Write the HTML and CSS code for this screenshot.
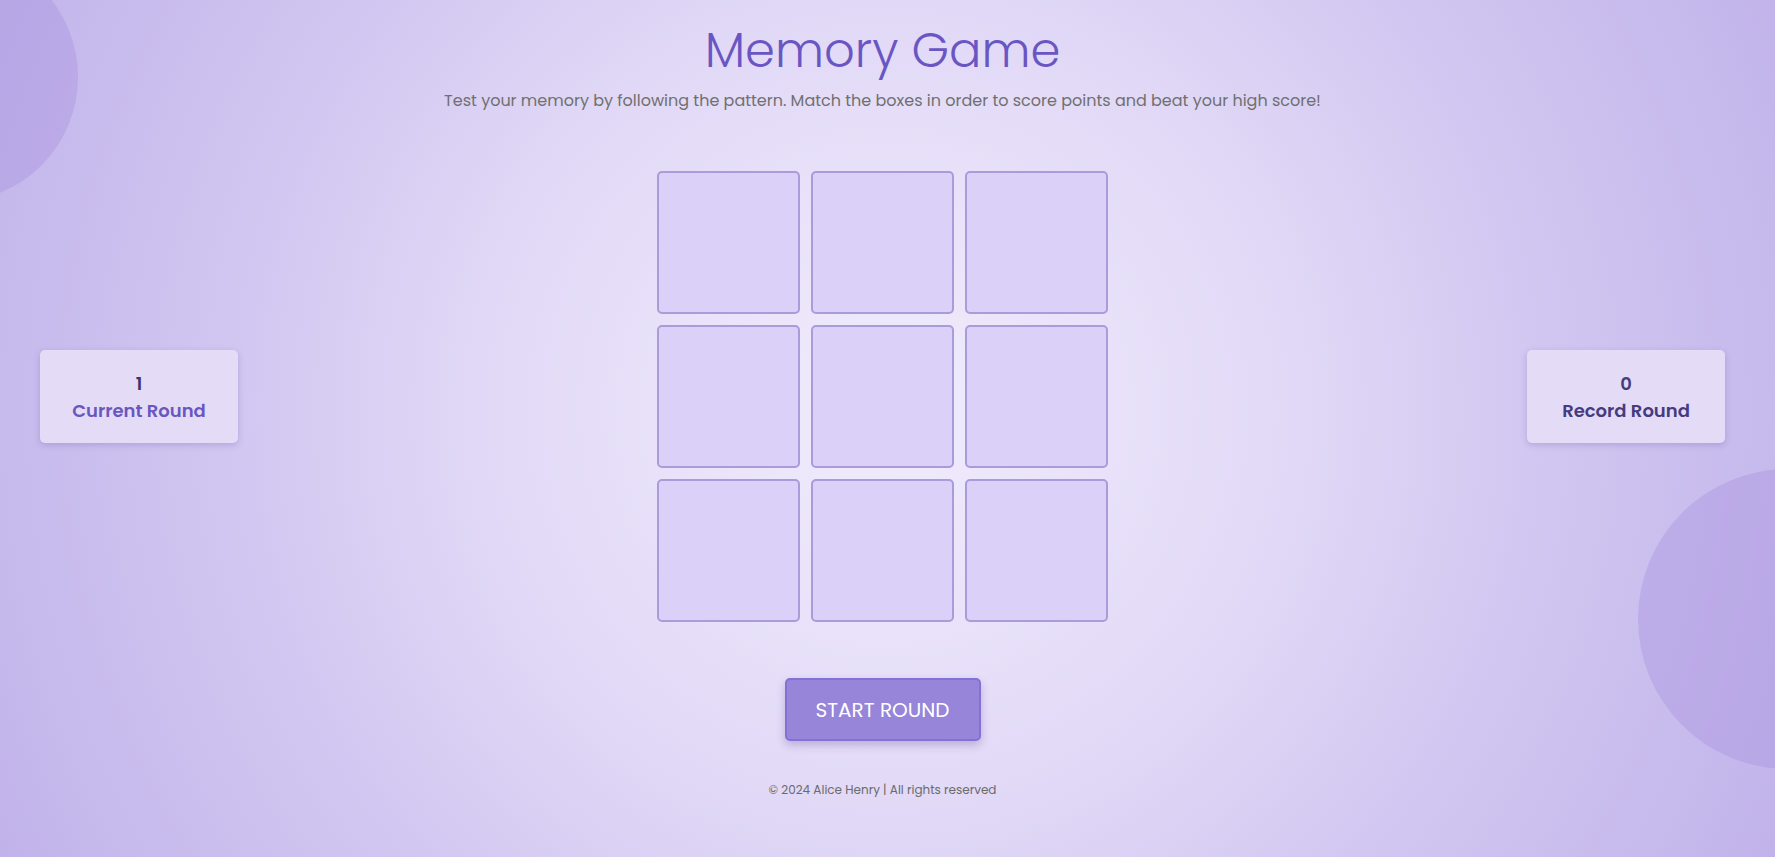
FILE: index.html
```html
<!DOCTYPE html>
<html lang="en">
<head>
<meta charset="utf-8">
<title>Memory Game</title>
<link rel="stylesheet" href="styles.css">
</head>
<body>
<div class="bubble bubble-tl"></div>
<div class="bubble bubble-br"></div>
<main class="page">
  <header class="header">
    <h1 class="title">Memory Game</h1>
    <p class="subtitle">Test your memory by following the pattern. Match the boxes in order to score points and beat your high score!</p>
  </header>
  <section class="game">
    <div class="panel panel-current">
      <div class="panel-value">1</div>
      <div class="panel-label">Current Round</div>
    </div>
    <div class="board">
      <div class="tile"></div><div class="tile"></div><div class="tile"></div>
      <div class="tile"></div><div class="tile"></div><div class="tile"></div>
      <div class="tile"></div><div class="tile"></div><div class="tile"></div>
    </div>
    <div class="panel panel-record">
      <div class="panel-value">0</div>
      <div class="panel-label">Record Round</div>
    </div>
  </section>
  <div class="actions">
    <button class="start-btn" type="button">START ROUND</button>
  </div>
  <footer class="footer">© 2024 Alice Henry | All rights reserved</footer>
</main>
</body>
</html>
```
FILE: styles.css
```css
* { box-sizing: border-box; }
html { height: 100%; overflow: hidden; }
body {
  margin: 0;
  height: 100%;
  overflow: hidden;
  font-family: "Poppins", "Inter", "DejaVu Sans", sans-serif;
  background: radial-gradient(circle farthest-corner at 50% 48%, #f1ecfc 0%, #e9e2fa 22%, #e0d8f6 42%, #d2c7f1 65%, #c1b3ea 100%);
  position: relative;
}
.bubble {
  position: absolute;
  border-radius: 50%;
  background: rgba(170, 150, 224, 0.45);
  z-index: 0;
}
.bubble-tl { width: 250px; height: 250px; left: -172px; top: -48px; }
.bubble-br { width: 300px; height: 300px; left: 1638px; top: 469px; }
.page {
  position: relative;
  z-index: 1;
  padding: 0 50px 0 40px;
  display: flex;
  flex-direction: column;
  align-items: stretch;
}
.header { text-align: center; padding-top: 21px; }
.title {
  margin: 0;
  font-size: 48px;
  line-height: 60px;
  font-weight: 300;
  color: #6a56c2;
}
.subtitle {
  margin: 8px 0 0;
  font-size: 16px;
  line-height: 24px;
  color: #707070;
}
.game {
  margin-top: 58px;
  display: flex;
  justify-content: space-between;
  align-items: center;
}
.panel {
  width: 198px;
  height: 93px;
  background: #e4dcf6;
  border-radius: 5px;
  box-shadow: 0 2px 6px rgba(90, 70, 160, 0.25);
  display: flex;
  flex-direction: column;
  align-items: center;
  justify-content: center;
  font-size: 18px;
  font-weight: 600;
  line-height: 27px;
}
.panel-current .panel-value { color: #3e336e; }
.panel-current .panel-label { color: #6a56c0; }
.panel-record .panel-value,
.panel-record .panel-label { color: #463a80; }
.board {
  display: grid;
  grid-template-columns: repeat(3, 143px);
  grid-auto-rows: 143px;
  gap: 11px;
}
.tile {
  background: #dbd0f8;
  border: 2px solid #ab9bd8;
  border-radius: 5px;
}
.actions {
  display: flex;
  justify-content: center;
  margin-top: 56px;
}
.start-btn {
  width: 196px;
  height: 63px;
  background: #9685d9;
  border: 2px solid #8571d3;
  border-radius: 5px;
  color: #ffffff;
  font-family: inherit;
  font-size: 20px;
  font-weight: 400;
  box-shadow: 0 4px 8px rgba(60, 40, 120, 0.25);
}
.footer {
  margin-top: 40px;
  text-align: center;
  font-size: 12px;
  line-height: 18px;
  color: #6b6b6b;
}
```
